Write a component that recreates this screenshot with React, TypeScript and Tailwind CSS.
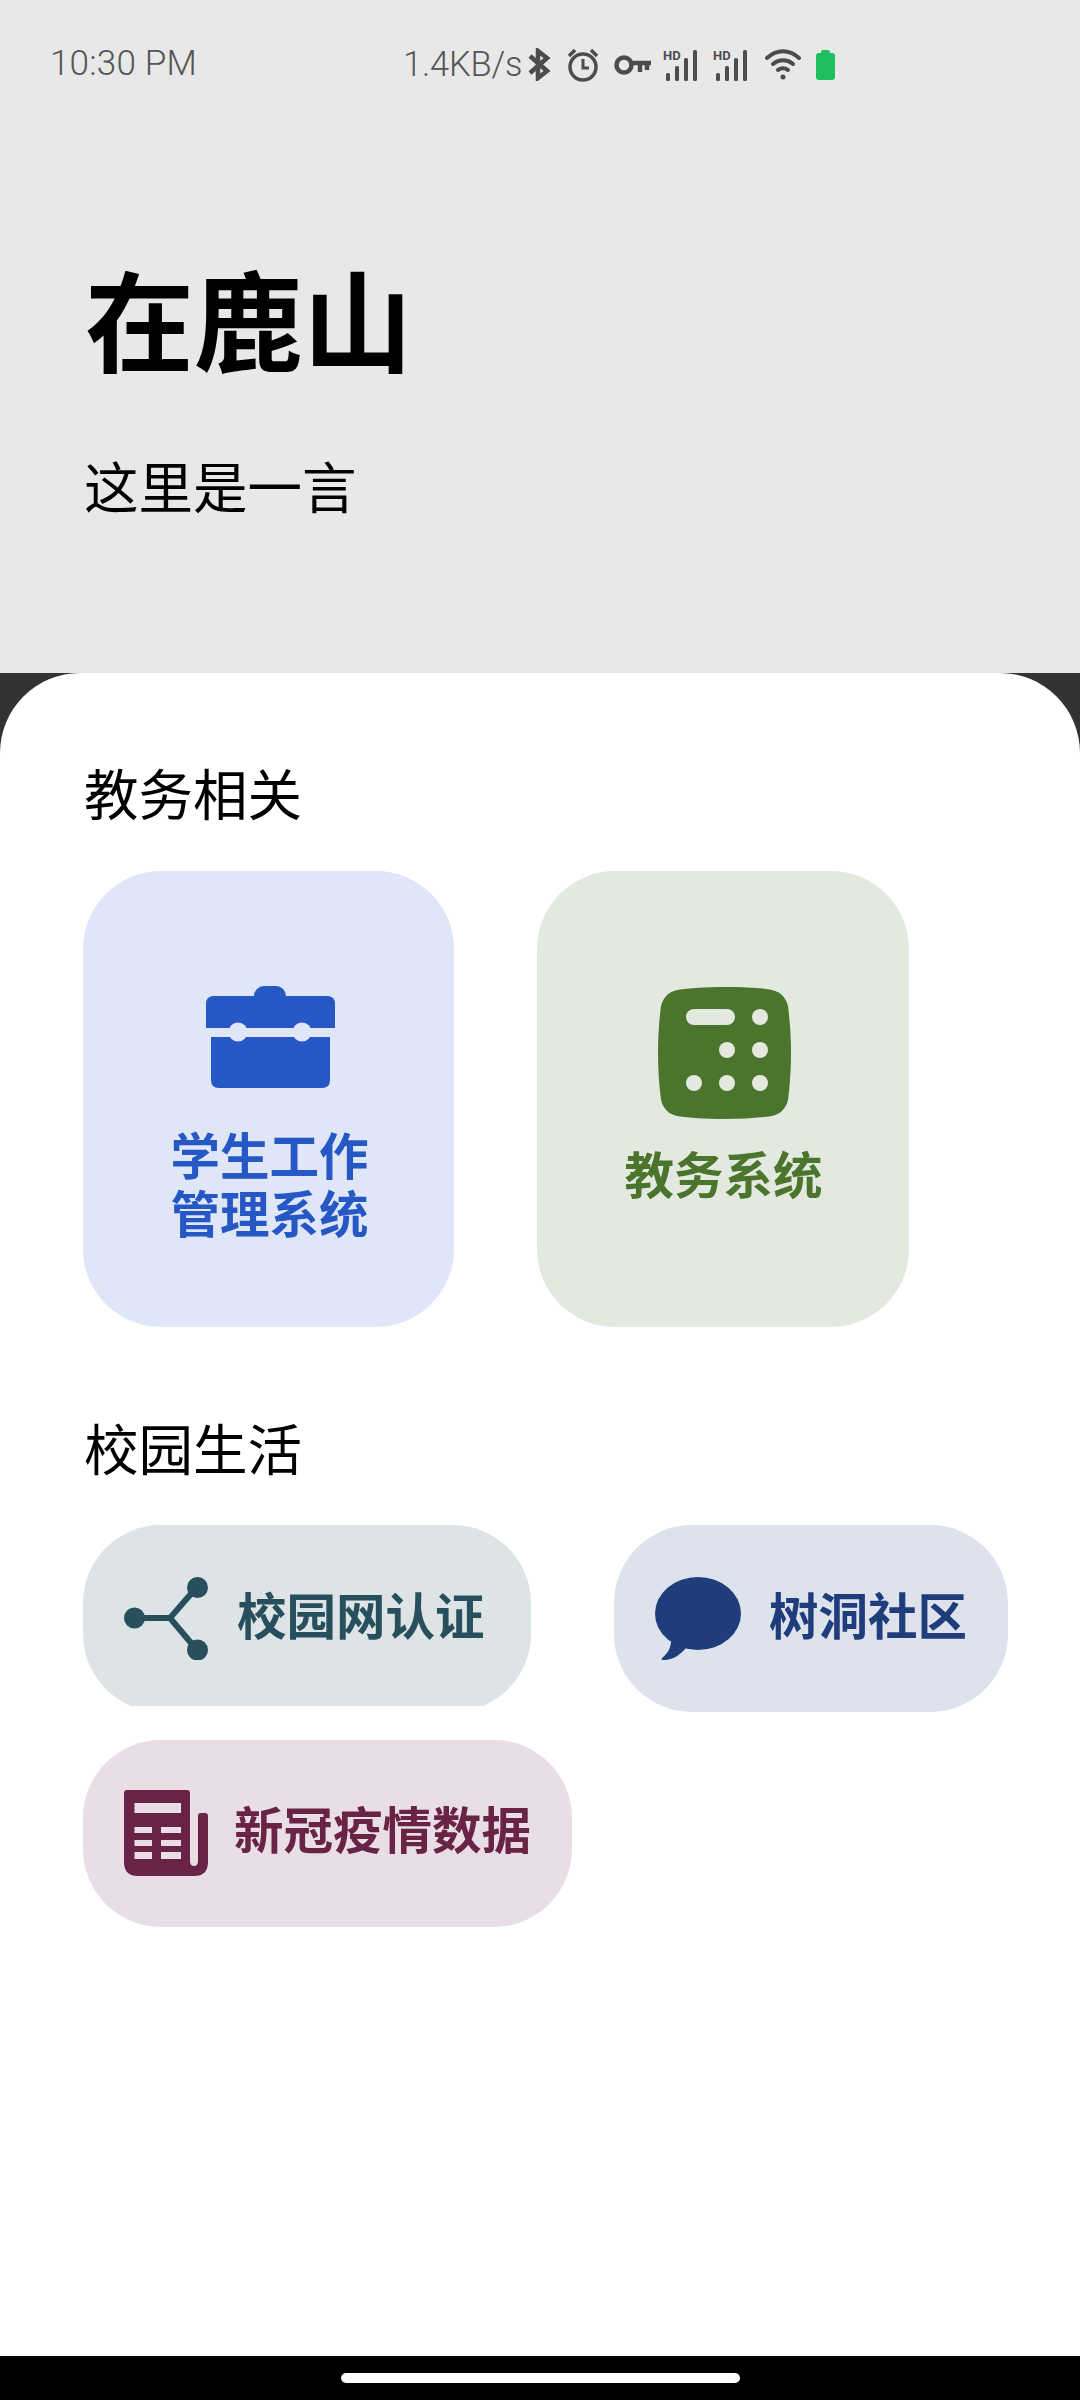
const cjk = "font-['Noto_Sans_CJK_SC','Noto_Sans',sans-serif]";

function SignalHd() {
  return (
    <svg width="36" height="32" viewBox="0 0 36 32" fill="#4c4c4c">
      <text x="0" y="11" fontSize="13" fontWeight="700" fontFamily="Roboto, sans-serif">
        HD
      </text>
      <rect x="3" y="24" width="4" height="8" rx="1.5" />
      <rect x="12" y="17" width="4" height="15" rx="1.5" />
      <rect x="21" y="9" width="4" height="23" rx="1.5" />
      <rect x="30" y="1" width="4" height="31" rx="1.5" />
    </svg>
  );
}

function StatusBar() {
  return (
    <div className="flex h-[129px] items-center text-[#555555] font-['Roboto',sans-serif] font-light">
      <span className="ml-[50px] w-[353px] text-[35px] tracking-[0.2px]">10:30 PM</span>
      <span className="w-[124px] text-[34.5px] tracking-[-0.2px]">1.4KB/s</span>
      <svg width="24" height="33" viewBox="0 0 22 33" fill="none" stroke="#4c4c4c" strokeWidth="4.5">
        <path d="M2 8 L19 23 L10 30 V3 L19 10 L2 25" />
      </svg>
      <svg className="ml-[16px]" width="32" height="34" viewBox="0 0 32 34" fill="none" stroke="#4c4c4c" strokeWidth="3.5">
        <circle cx="16" cy="19" r="13" />
        <path d="M16 11 V20 H22" strokeWidth="3" />
        <path d="M2 8 L8 2 M30 8 L24 2" />
      </svg>
      <svg className="ml-[15px]" width="38" height="22" viewBox="0 0 38 22" fill="none" stroke="#4c4c4c" strokeWidth="4.5">
        <circle cx="10" cy="11" r="7.5" />
        <path d="M18 9 H37 M26 9 V18 M33 9 V16" />
      </svg>
      <div className="ml-[11px] flex">
        <SignalHd />
      </div>
      <div className="ml-[14px] flex">
        <SignalHd />
      </div>
      <svg className="ml-[16px]" width="36" height="32" viewBox="0 0 36 32" fill="none" stroke="#4c4c4c" strokeWidth="4" strokeLinecap="round">
        <path d="M2 9 C12 0 24 0 34 9" />
        <path d="M8 15 C14 10 22 10 28 15" />
        <path d="M13 21 C16 19 20 19 23 21" />
        <circle cx="18" cy="28" r="1.5" fill="#4c4c4c" strokeWidth="2" />
      </svg>
      <svg className="ml-[15px]" width="19" height="30" viewBox="0 0 19 30" fill="#1dbf5e">
        <rect x="5" y="0" width="9" height="5" rx="2" />
        <rect x="0" y="3" width="19" height="27" rx="3" />
      </svg>
    </div>
  );
}

function BriefcaseIcon() {
  return (
    <svg className="ml-[3px]" width="129" height="102" viewBox="0 0 129 102" fill="#2558c4">
      <rect x="48" y="0" width="32" height="20" rx="10" />
      <path d="M8 10 H121 Q129 10 129 18 V42 H0 V18 Q0 10 8 10 Z" />
      <path d="M5 51 H124 V94 Q124 102 116 102 H13 Q5 102 5 94 Z" />
      <circle cx="32" cy="46" r="9.5" fill="#dfe6f7" />
      <circle cx="96" cy="46" r="9.5" fill="#dfe6f7" />
    </svg>
  );
}

function CalculatorIcon() {
  return (
    <svg className="ml-[2px]" width="133" height="132" viewBox="0 0 133 132">
      <path
        fill="#4b742d"
        d="M66 0 C90 0 105 1 114 3 C123 5 128 11 130 19 C132 35 133 50 133 66 C133 82 132 97 130 113 C128 121 123 127 114 129 C100 131 85 132 66 132 C47 132 32 131 19 129 C10 127 5 121 3 113 C1 97 0 82 0 66 C0 50 1 35 3 19 C5 11 10 5 19 3 C32 1 47 0 66 0 Z"
      />
      <g fill="#e4e9e0">
        <rect x="28" y="22" width="49" height="16" rx="8" />
        <circle cx="102" cy="30" r="8" />
        <circle cx="69" cy="63" r="8" />
        <circle cx="102" cy="63" r="8" />
        <circle cx="36" cy="96" r="8" />
        <circle cx="69" cy="96" r="8" />
        <circle cx="102" cy="96" r="8" />
      </g>
    </svg>
  );
}

function ShareIcon() {
  return (
    <svg width="84" height="83" viewBox="0 0 84 83" fill="#27505c">
      <path d="M11 41 H46 L73 10 M46 41 L73 73" fill="none" stroke="#27505c" strokeWidth="6" />
      <circle cx="10.5" cy="41" r="10.5" />
      <circle cx="73.5" cy="10.5" r="10.5" />
      <circle cx="73.5" cy="73" r="10.5" />
    </svg>
  );
}

function BubbleIcon() {
  return (
    <svg width="86" height="83" viewBox="0 0 86 83" fill="#1f3d7a">
      <ellipse cx="43" cy="36.5" rx="43" ry="36.5" />
      <path d="M16 60 C17 71 12 77 7 81 C6 83 7 83 9 83 C18 83 25 78 31 71 Z" />
    </svg>
  );
}

function NewsIcon() {
  return (
    <svg width="84" height="86" viewBox="0 0 84 86">
      <path
        fill="#692346"
        d="M3 0 H63 Q66 0 66 3 V71 Q66 76 70 76 Q74 76 74 71 V26 Q74 23 77 23 H81 Q84 23 84 26 V72 Q84 86 70 86 H14 Q0 86 0 72 V3 Q0 0 3 0 Z"
      />
      <g fill="#e9dee5">
        <rect x="10.5" y="13" width="46.5" height="10" />
        <rect x="10.5" y="37" width="17.5" height="6" />
        <rect x="37" y="37" width="20" height="6" />
        <rect x="10.5" y="50" width="17.5" height="6" />
        <rect x="37" y="50" width="20" height="6" />
        <rect x="10.5" y="62" width="17.5" height="7" />
        <rect x="37" y="62" width="20" height="7" />
      </g>
    </svg>
  );
}

export default function App() {
  return (
    <div className={`flex h-[2400px] w-[1080px] flex-col bg-[#333333] ${cjk}`}>
      <div className="h-[673px] bg-[#e8e8e8]">
        <StatusBar />
        <h1 className="ml-[85px] mt-[123px] text-[109px] leading-[130px] font-bold text-black">在鹿山</h1>
        <p className="ml-[84px] mt-[71px] text-[54.5px] leading-[64px] text-black">这里是一言</p>
      </div>

      <div className="flex-1 rounded-t-[80px] bg-white pl-[83px] pt-[81px]">
        <h2 className="mb-[41px] h-[76px] pl-[1px] text-[54.5px] leading-[76px] text-black">教务相关</h2>
        <div className="flex gap-x-[83px]">
          <div className="flex h-[456px] w-[371px] flex-col items-center rounded-[78px] bg-[#dfe6f7] pt-[115px]">
            <BriefcaseIcon />
            <div className="mt-[37px] pl-[2px] text-center text-[49.5px] leading-[58px] font-bold text-[#2558c4]">
              学生工作
              <br />
              管理系统
            </div>
          </div>
          <div className="flex h-[456px] w-[372px] flex-col items-center rounded-[78px] bg-[#e4e9e0] pt-[116px]">
            <CalculatorIcon />
            <div className="mt-[25px] pl-[1px] text-center text-[49.5px] leading-[58px] font-bold text-[#4b742d]">教务系统</div>
          </div>
        </div>

        <h2 className="mb-[40px] mt-[82px] h-[76px] pl-[1px] text-[54.5px] leading-[76px] text-black">校园生活</h2>
        <div className="flex flex-col gap-y-[28px]">
          <div className="flex items-start gap-x-[83px]">
            <div className="h-[181px] w-[448px] overflow-hidden">
              <div className="flex h-[187px] items-center gap-x-[29px] rounded-[78px] bg-[#dee4e6] pl-[41px]">
                <ShareIcon />
                <span className="pb-[9px] text-[49.5px] leading-[58px] font-bold text-[#27505c]">校园网认证</span>
              </div>
            </div>
            <div className="flex h-[187px] w-[394px] items-center gap-x-[28px] rounded-[78px] bg-[#dee2ec] pl-[41px]">
              <BubbleIcon />
              <span className="pb-[9px] text-[49.5px] leading-[58px] font-bold text-[#1f3d7a]">树洞社区</span>
            </div>
          </div>
          <div className="flex h-[187px] w-[489px] items-center gap-x-[26px] rounded-[78px] bg-[#e9dee5] pb-[2px] pl-[41px]">
            <NewsIcon />
            <span className="pb-[9px] text-[49.5px] leading-[58px] font-bold text-[#692346]">新冠疫情数据</span>
          </div>
        </div>
      </div>

      <div className="flex h-[44px] justify-center bg-black pt-[17px]">
        <div className="h-[10px] w-[399px] rounded-full bg-white" />
      </div>
    </div>
  );
}
